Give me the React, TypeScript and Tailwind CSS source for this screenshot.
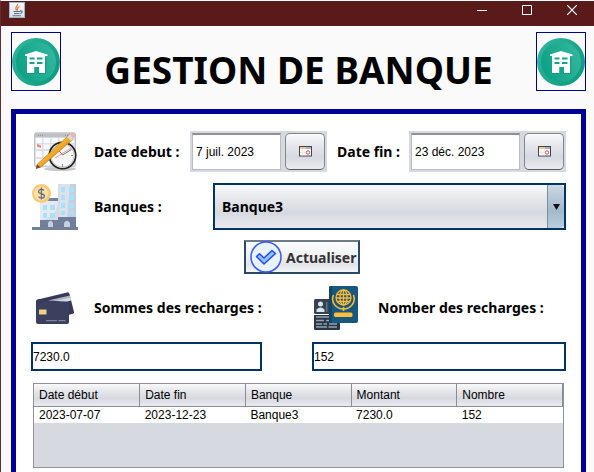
import type { ReactNode } from "react";

const labelFont = "font-['Noto_Sans','DejaVu_Sans_Condensed',sans-serif] font-bold";
const label = `${labelFont} text-[14px] leading-5 whitespace-nowrap text-black`;
const steel = "bg-[linear-gradient(#fafafc_0%,#e6e8ec_30%,#d6d9df_65%,#e9ebf0_100%)]";

function HomeIcon() {
  return (
    <svg viewBox="0 0 48 48" className="block h-12 w-12" aria-hidden="true">
      <defs>
        <linearGradient id="rim" x1="0" y1="0.2" x2="1" y2="0.8">
          <stop offset="0" stopColor="#2fb49a" />
          <stop offset="0.5" stopColor="#1ea88c" />
          <stop offset="1" stopColor="#089c80" />
        </linearGradient>
        <linearGradient id="disc" x1="0" y1="0.7" x2="1" y2="0.3">
          <stop offset="0" stopColor="#0ba184" />
          <stop offset="1" stopColor="#33b69d" />
        </linearGradient>
      </defs>
      <circle cx="24" cy="24" r="24" fill="url(#rim)" />
      <circle cx="24" cy="24" r="20" fill="url(#disc)" />
      <path d="M15 20h19.500v16H15z" fill="#0b7f69" opacity=".3" />
      <path d="M13 16.500 24 13l11.500 3.500v1.500H33v17h-6v-6h-4.500v6H15V18h-2z" fill="#fff" />
      <path d="M17.500 19.500h5v2h-5zm7.500 0h5.500v2H25zm-7.500 4.500h5v2h-5zm7.500 0h5.500v2H25zM22.500 29H27v7h-4.500z" fill="#16a588" />
    </svg>
  );
}

function HomeButton() {
  return (
    <button type="button" aria-label="Accueil" className="flex h-[59px] w-[50px] shrink-0 items-center justify-center border border-[#000099] bg-[#fafafa]">
      <HomeIcon />
    </button>
  );
}

function JavaIcon() {
  return (
    <svg viewBox="0 0 16 16" className="h-4 w-4" aria-hidden="true">
      <defs>
        <linearGradient id="tile" x1="0" y1="0" x2="0" y2="1">
          <stop offset="0" stopColor="#f5f8fa" />
          <stop offset="1" stopColor="#d7e1e9" />
        </linearGradient>
      </defs>
      <rect x=".5" y=".5" width="15" height="15" fill="url(#tile)" stroke="#9fb4c4" />
      <path d="M8.500 2c1 2-3.500 3-1 6.500M10.500 4.500C7 6 9.500 7 8 8.500" fill="none" stroke="#e8762d" strokeWidth="1.200" />
      <path d="M4.500 9.500h7M5 11.500h5.500M3.500 13.700h8.500M11 9c3-.8 2.500 2 .3 2.500" fill="none" stroke="#54718c" strokeWidth="1.100" />
    </svg>
  );
}

function CalendarClockIcon() {
  return (
    <svg viewBox="0 0 44 40" className="h-10 w-11" aria-hidden="true">
      <defs>
        <linearGradient id="pencil" x1="0" y1="0" x2="1" y2="1">
          <stop offset=".35" stopColor="#fcc83f" />
          <stop offset=".65" stopColor="#e48b12" />
        </linearGradient>
      </defs>
      <ellipse cx="26" cy="37" rx="16" ry="2" fill="#c9c9c9" />
      <rect x=".5" y=".8" width="41" height="34" rx="1.500" fill="#dfe0e6" stroke="#c1c2c9" />
      <path d="M1 1.300h40v4H1z" fill="#bfc0c4" />
      <path d="M4 3.300h6M31 3.300h3" stroke="#909096" strokeDasharray="1 1" />
      <g fill="#fafafc">
        <path d="M2 6h6v5H2zM9.500 6h6.500v5H9.500zM17.500 6H24v5h-6.500zM25.500 6H32v5h-6.500zM34 6h6v5h-6zM2 12.500h6V17H2zM9.500 12.500h6.500V17H9.500zM17.500 12.500H24V17h-6.500zM2 19h6v6H2zM9.500 19h6.500v6H9.500zM2 27h6v6.500H2zM9.500 27h6.500v6.500H9.500z" />
      </g>
      <path d="m3 12 4 1.500v2.500L3 14.500z" fill="#ee8279" />
      <circle cx="28.500" cy="23.500" r="13.200" fill="#f4f4f4" stroke="#222" strokeWidth="1.700" />
      <circle cx="28.500" cy="23.500" r="11.700" fill="#f6f6f6" stroke="#c5c5c5" />
      <path d="M28.500 13v2M28.500 32v3M18 23.500h2M37 23.500h2" stroke="#888" />
      <path d="m24 17.500 4.500 5.500 9-5.500" fill="none" stroke="#555" strokeWidth=".8" />
      <path d="m21 26 16-10" stroke="#df5551" strokeWidth=".6" />
      <path d="M3 32.500 35.500 2.500l4 4.500L7 35l-5 1.500z" fill="url(#pencil)" stroke="#a66818" strokeWidth=".5" />
      <path d="m3 32.500 3.500 2.700-4.500 1.600z" fill="#6c463f" />
      <path d="m33 5 3.500-3 3.700 4-3.500 3z" fill="#d4dbd9" />
      <path d="m36 2 2-1.500c1.700-.6 4 2 2.700 3.500L39 6.500z" fill="#f6b1ad" />
    </svg>
  );
}

function BankIcon() {
  return (
    <svg viewBox="0 0 46 46" className="h-[46px] w-[46px]" aria-hidden="true">
      <path d="M27 0h17v36H27z" fill="#dce1ec" />
      <path d="M38 0h6v36h-9z" fill="#c6cfdd" />
      <path d="M8 16h18v27H8z" fill="#e5e9f1" />
      <path d="M26 0h2v36H11C22 33 26 25 26 15z" fill="#d5dce7" />
      <path d="M8 14h18v3H8z" fill="#76839a" />
      <path d="M8 36h20v8H8zM26 33h18v11H26z" fill="#71809a" />
      <path d="M0 43h46v3H0z" fill="#718096" />
      <path d="M16 43v-4q2.500-4.500 5 0v4zM32 43v-4q3-4.500 6 0v4z" fill="#c6cfdd" />
      <path d="M29 3h4v5h-4zm8 0h5v5h-5zm-8 8h4v5h-4zm8 0h5v5h-5zm-8 8h4v5h-4zm8 0h5v5h-5zm-8 8h4v4h-4zm8 0h5v4h-5zM11 21h4v5h-4zm7 0h5v5h-5zm-7 8h4v5h-4zm7 0h5v5h-5z" fill="#a9e1f8" />
      <circle cx="9.500" cy="9.500" r="9.500" fill="#f9c978" />
      <circle cx="9" cy="9.500" r="7" fill="#fce0a3" />
      <path d="M12 6.500C10.500 4.500 6.500 5 6.500 7.500c0 3 6 1.500 6 4.500 0 2.500-4.500 3-6 .7M9.400 3.500v12" fill="none" stroke="#687084" strokeWidth="1.300" />
    </svg>
  );
}

function CardsIcon() {
  return (
    <svg viewBox="0 0 38 32" className="h-8 w-[38px]" aria-hidden="true">
      <path d="M2 7.500 31 .4q2-.4 2.500 1.600L38 20q.2 1.400-2 2l-4 1z" fill="#343a58" />
      <path d="m12 8.500 22-5 1 4.500-4 1.500z" fill="#b3b5c4" />
      <path d="m20 9 15-3.500v3L30 10z" fill="#d7d8df" />
      <rect y="9.500" width="33" height="22.500" rx="2" fill="#3b405f" />
      <path d="M0 14V9q0-1.500 3-2l8 2z" fill="#363c5b" />
      <rect x="3" y="17.500" width="7.500" height="5" rx=".5" fill="#ead08a" />
      <path d="M10 28.700h11m1.500 0h7" stroke="#8d91a8" />
    </svg>
  );
}

function PassportIcon() {
  return (
    <svg viewBox="0 0 44 44" className="h-11 w-11" aria-hidden="true">
      <rect y="13" width="26" height="15" rx="1.500" fill="#344251" />
      <path d="M0 29h26v14q0 1-1 1H1q-1 0-1-1z" fill="#2b3745" />
      <circle cx="6.500" cy="18" r="2.500" fill="#d9e5ec" />
      <path d="M2.500 26v-2.500q4-4 8 0V26z" fill="#d9e5ec" />
      <path d="M12.800 16v10" stroke="#788695" />
      <path d="M2 31h21M2 34.500h8m2 0h3M2 38h6m1.500 0H13m2 0h8M2 41h11m1.500 0H23" stroke="#91a4b1" strokeWidth="1.300" />
      <rect x="15" width="29" height="37" rx="2" fill="#19587e" />
      <path d="M15 2q0-2 2-2h1v37h-1q-2 0-2-2z" fill="#114669" />
      <g fill="none" stroke="#ffb832" strokeWidth="1.300">
        <circle cx="29.500" cy="11.500" r="7.500" />
        <ellipse cx="29.500" cy="11.500" rx="3.600" ry="7.500" />
        <path d="M22.500 8.500h14M22 12h15M23 15.500h13M29.500 4v15" />
        <path d="M19.500 9C16.500 16 22 23 29.500 23S42 16 39.500 9M29.500 21v4" strokeWidth="1.600" />
      </g>
      <rect x="20" y="26.500" width="18.500" height="4.500" rx="1.500" fill="#ffbc38" />
    </svg>
  );
}

function CheckIcon() {
  return (
    <svg viewBox="0 0 32 32" className="h-8 w-8 shrink-0" aria-hidden="true">
      <circle cx="16" cy="16" r="15" fill="#e9f2ff" stroke="#3558ff" strokeWidth="1.500" />
      <path d="m6.500 15.500 3-2.800 4.500 4.300 8-7.500 3.500 3L14 23z" fill="#8dc4fb" stroke="#2949ee" strokeWidth="1.500" strokeLinejoin="round" />
    </svg>
  );
}

function PickerIcon() {
  return (
    <svg viewBox="0 0 13 11" className="h-[11px] w-[13px]" aria-hidden="true">
      <rect x=".5" y=".5" width="12" height="9.500" fill="#fff" stroke="#4a4444" />
      <path d="M1 1h6v2H1z" fill="#edc994" />
      <path d="M7 1h5v2H7z" fill="#9eb1cd" />
      <path d="M3.500 4v6M6 4v6M1 6.500h5" stroke="#ddd" strokeWidth=".6" />
      <circle cx="9" cy="6.500" r="1.700" fill="#fff" stroke="#dd4a50" />
    </svg>
  );
}

function DatePicker({ id, value, inputWidth, grow }: { id: string; value: string; inputWidth: string; grow?: boolean }) {
  return (
    <div className={`flex h-[41px] gap-1 bg-[#d6d9df] p-0.5 ${grow ? "min-w-0 flex-1" : ""}`}>
      <input
        id={id}
        type="text"
        defaultValue={value}
        className={`${inputWidth} min-w-0 rounded-none border border-t-2 border-[#b9bcc2] border-t-[#8e9097] bg-white px-[3px] text-[12px] text-black outline-none`}
      />
      <button type="button" aria-label="Choisir une date" className={`flex w-10 shrink-0 items-center justify-center rounded-[5px] border border-[#82868f] border-b-[#55585e] ${steel}`}>
        <PickerIcon />
      </button>
    </div>
  );
}

function ResultField({ id, text, value, icon, className }: { id: string; text: string; value: string; icon: ReactNode; className: string }) {
  return (
    <div className={className}>
      <div className="flex h-12 items-center">
        {icon}
        <label htmlFor={id} className={label}>{text}</label>
      </div>
      <input id={id} type="text" defaultValue={value} className="mt-2.5 block h-[29px] w-full rounded-none border-2 border-[#003366] bg-white text-[12px] text-black outline-none" />
    </div>
  );
}

const columns = ["Date début", "Date fin", "Banque", "Montant", "Nombre"];
const rows = [["2023-07-07", "2023-12-23", "Banque3", "7230.0", "152"]];

export default function App() {
  return (
    <div className="flex min-h-screen flex-col border-t border-l border-t-white border-l-[#6b2a32] bg-[#fafafa] font-['Liberation_Sans',Arial,sans-serif]">
      <header className="flex h-[25px] items-start justify-between bg-[#5a1a1a] pl-2">
        <span className="pt-px"><JavaIcon /></span>
        <div className="flex text-white">
          <button type="button" aria-label="Réduire" className="flex h-[18px] w-[45px] items-center justify-center">
            <svg viewBox="0 0 10 10" className="h-2.5 w-2.5"><path d="M0 5.500h10" stroke="currentColor" /></svg>
          </button>
          <button type="button" aria-label="Agrandir" className="flex h-[18px] w-[45px] items-center justify-center">
            <svg viewBox="0 0 10 10" className="h-2.5 w-2.5"><path d="M.5.500h9v9h-9z" fill="none" stroke="currentColor" /></svg>
          </button>
          <button type="button" aria-label="Fermer" className="flex h-[18px] w-[45px] items-center justify-center">
            <svg viewBox="0 0 10 10" className="h-2.5 w-2.5"><path d="m0 0 10 10M10 0 0 10" stroke="currentColor" strokeWidth="1.200" /></svg>
          </button>
        </div>
      </header>

      <main className="flex flex-1 flex-col pt-1.5 pr-2 pl-2.5">
        <div className="flex items-start justify-between">
          <HomeButton />
          <h1 className={`${labelFont} pt-4 text-[37px] leading-[44px] whitespace-nowrap text-black`}>GESTION DE BANQUE</h1>
          <HomeButton />
        </div>

        <section className="mt-[17px] flex-1 border-[5px] border-b-0 border-[#000099] bg-white px-[15px] pt-[17px]">
          <div className="flex items-center">
            <div className="flex w-[63px] shrink-0 pl-[3px]"><CalendarClockIcon /></div>
            <label htmlFor="debut" className={`${label} w-24 shrink-0`}>Date debut :</label>
            <DatePicker id="debut" value="7 juil. 2023" inputWidth="w-[89px]" />
            <label htmlFor="fin" className={`${label} w-[82px] shrink-0 pl-2.5`}>Date fin :</label>
            <DatePicker id="fin" value="23 déc. 2023" inputWidth="w-0 flex-1" grow />
          </div>

          <div className="mt-[11px] flex items-center">
            <div className="flex w-[63px] shrink-0 pl-px"><BankIcon /></div>
            <label htmlFor="banque" className={`${label} w-[119px] shrink-0`}>Banques :</label>
            <div className="relative min-w-0 flex-1">
              <select id="banque" className={`${labelFont} block h-[47px] w-full appearance-none rounded-none border-2 border-[#003366] pl-[7px] text-[14px] text-black outline-none ${steel}`}>
                <option>Banque3</option>
              </select>
              <span className="pointer-events-none absolute inset-y-0.5 right-0.5 flex w-[17px] items-center justify-center rounded-r border-l border-[#7b8c9c] bg-[linear-gradient(#c9d8e2,#a3b8ca_60%,#b9cede)]">
                <svg viewBox="0 0 7 6" className="h-1.5 w-[7px]"><path d="M0 0h7L3.500 6z" fill="#111" /></svg>
              </span>
            </div>
          </div>

          <div className="mt-2.5 flex justify-center pl-[7px]">
            <button type="button" className={`${labelFont} flex h-[34px] w-[116px] items-center gap-1 border-2 border-[#2c4a66] border-t-[#6d7a88] bg-[linear-gradient(#fcfcfd,#eff0f3_50%,#e2e4e9_75%,#f5f6f8)] pl-1 text-[14px] whitespace-nowrap text-[#333]`}>
              <CheckIcon />
              Actualiser
            </button>
          </div>

          <div className="mt-2.5 flex gap-[50px]">
            <ResultField
              id="sommes"
              text="Sommes des recharges :"
              value="7230.0"
              icon={<div className="flex w-[63px] shrink-0 pl-[5px]"><CardsIcon /></div>}
              className="w-[231px] shrink-0"
            />
            <ResultField
              id="nombre"
              text="Nomber des recharges :"
              value="152"
              icon={<div className="flex w-[66px] shrink-0 pl-0.5"><PassportIcon /></div>}
              className="min-w-0 flex-1"
            />
          </div>

          <div className="mx-0.5 mt-3 h-[85px] border border-[#8f929b] bg-[#d6d9df]">
            <table className="w-full table-fixed border-collapse text-left text-[12px] leading-4 text-black">
              <thead>
                <tr className={steel}>
                  {columns.map((c) => (
                    <th key={c} scope="col" className="h-[22px] border-r border-b border-[#8b8d95] p-0 pl-[5px] font-normal">{c}</th>
                  ))}
                </tr>
              </thead>
              <tbody>
                {rows.map((row) => (
                  <tr key={row[0]} className="bg-white">
                    {row.map((cell, i) => (
                      <td key={i} className="h-4 p-0 pl-[5px]">{cell}</td>
                    ))}
                  </tr>
                ))}
              </tbody>
            </table>
          </div>
        </section>
      </main>
    </div>
  );
}
